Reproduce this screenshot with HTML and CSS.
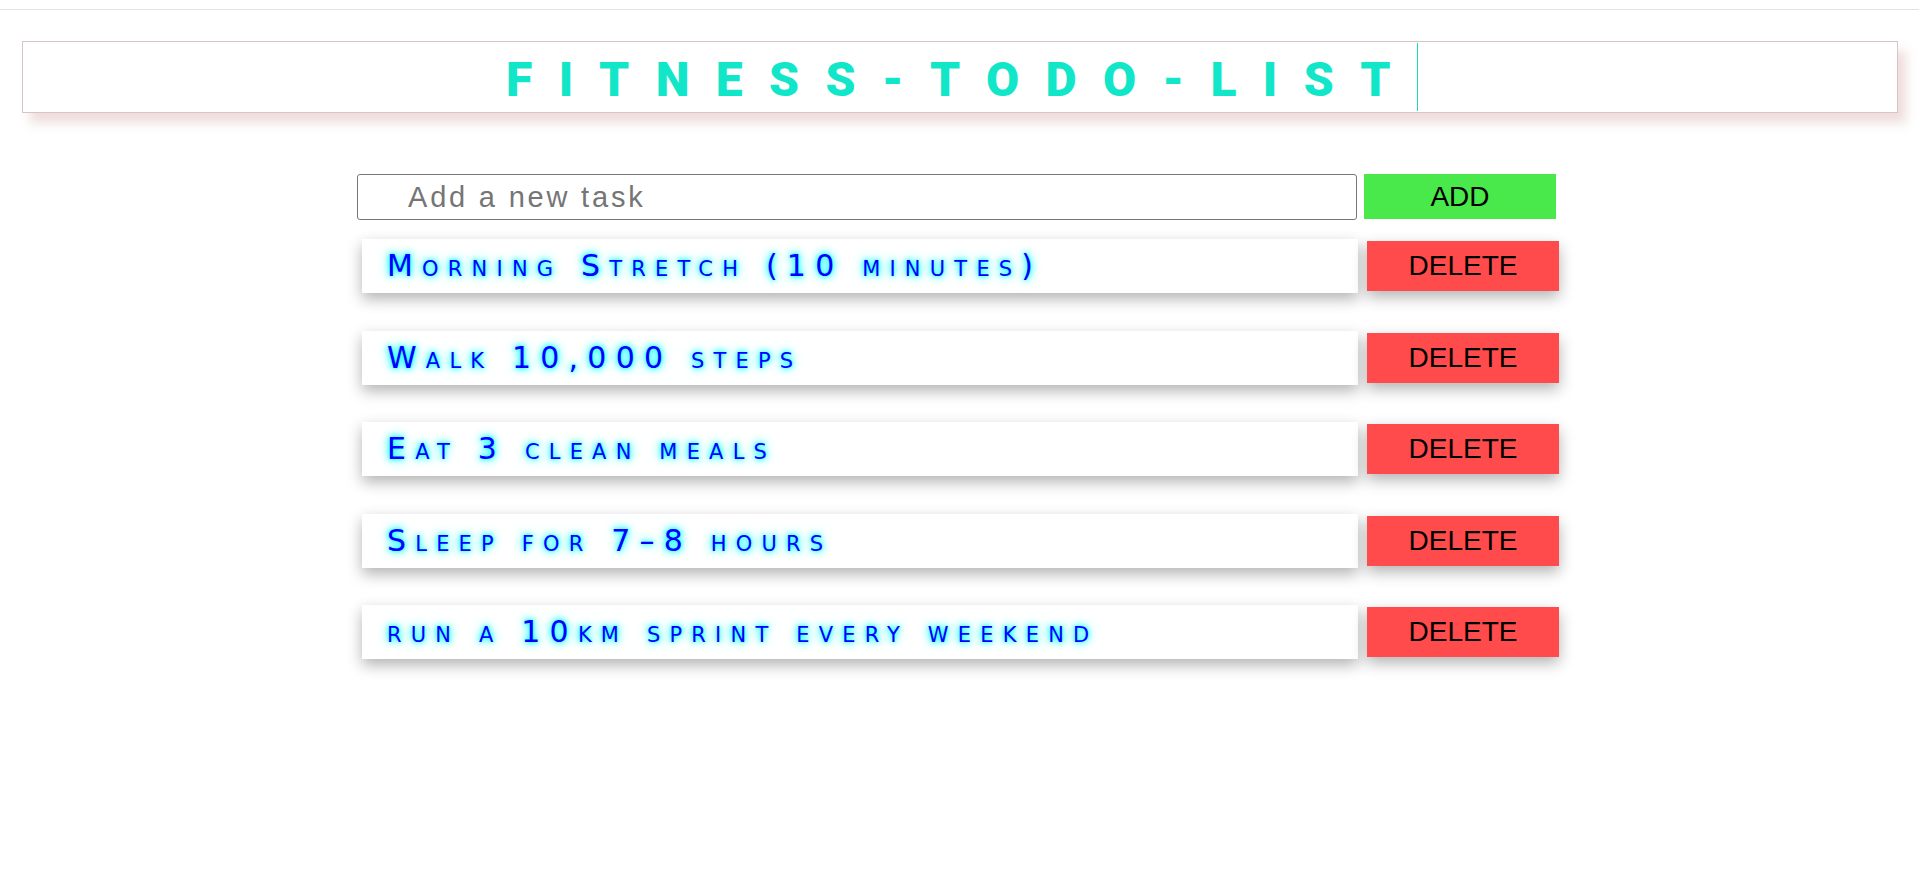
FILE: index.html
```html
<!DOCTYPE html>
<html lang="en">
<head>
<meta charset="utf-8">
<title>Fitness Todo List</title>
<link rel="stylesheet" href="styles.css">
</head>
<body>
<div class="topline"></div>
<header class="banner">
  <h1 class="title">FITNESS-TODO-LIST</h1>
</header>
<main class="todo">
  <div class="add-row">
    <input class="task-input" type="text" placeholder="Add a new task">
    <button class="add-btn">ADD</button>
  </div>
  <ul class="task-list">
    <li class="task"><span class="task-text">Morning Stretch (10 minutes)</span><button class="delete-btn">DELETE</button></li>
    <li class="task"><span class="task-text">Walk 10,000 steps</span><button class="delete-btn">DELETE</button></li>
    <li class="task"><span class="task-text">Eat 3 clean meals</span><button class="delete-btn">DELETE</button></li>
    <li class="task"><span class="task-text">Sleep for 7–8 hours</span><button class="delete-btn">DELETE</button></li>
    <li class="task"><span class="task-text">run a 10km sprint every weekend</span><button class="delete-btn">DELETE</button></li>
  </ul>
</main>
</body>
</html>
```
FILE: styles.css
```css
html, body {
  margin: 0;
  padding: 0;
  background: #ffffff;
}
body {
  font-family: "Liberation Sans", Arial, sans-serif;
}
.topline {
  margin-top: 9px;
  border-top: 1px solid #e2e2e2;
}
.banner {
  display: flex;
  justify-content: center;
  height: 70px;
  margin: 31px 21px 0 22px;
  border: 1px solid #dac5c5;
  box-shadow: 8px 10px 10px rgba(190, 120, 120, 0.25);
  background: #fff;
}
.title {
  margin: 1px 0 0 4px;
  height: 68px;
  box-sizing: border-box;
  padding-top: 6px;
  line-height: 62px;
  font-family: Roboto, "Liberation Sans", sans-serif;
  font-size: 48px;
  font-weight: 900;
  letter-spacing: 26.4px;
  color: #12e6c9;
  border-right: 1px solid #1dd6c2;
  white-space: nowrap;
}
.todo {
  width: 1205px;
  margin: 61px 0 0 357px;
  padding-bottom: 60px;
}
.add-row {
  display: flex;
  gap: 7px;
}
.task-input {
  width: 1000px;
  height: 46px;
  box-sizing: border-box;
  border: 1px solid #767676;
  border-radius: 3px;
  padding: 0 0 0 50px;
  font-family: "Liberation Sans", Arial, sans-serif;
  font-size: 29px;
  letter-spacing: 2.8px;
  color: #222;
  outline: none;
}
.task-input::placeholder {
  color: #757575;
}
.add-btn {
  width: 192px;
  height: 45px;
  border: none;
  background: #49e84b;
  font-family: "Liberation Sans", Arial, sans-serif;
  font-size: 28px;
  color: #000;
  padding: 0;
}
.task-list {
  list-style: none;
  margin: 19px 0 0;
  padding: 0 0 0 5px;
  display: flex;
  flex-direction: column;
  gap: 37.5px;
}
.task {
  display: flex;
  align-items: center;
  gap: 9px;
}
.task-text {
  width: 996px;
  height: 54px;
  line-height: 54px;
  box-sizing: border-box;
  padding-left: 25px;
  background: #fff;
  box-shadow: 0 6px 14px rgba(0, 0, 0, 0.3);
  font-family: "DejaVu Sans", sans-serif;
  font-weight: 400;
  font-variant: small-caps;
  font-size: 30px;
  letter-spacing: 9.2px;
  color: #0000ff;
  text-shadow: 0 0 4px #00ffff, 0 0 8px #00ffff, 0 0 12px #7fffff;
  white-space: nowrap;
}
.delete-btn {
  width: 192px;
  height: 50px;
  border: none;
  padding: 0;
  background: #ff4b4b;
  font-family: "Liberation Sans", Arial, sans-serif;
  font-size: 28px;
  color: #000;
  box-shadow: 0 6px 14px rgba(0, 0, 0, 0.3);
}
```
